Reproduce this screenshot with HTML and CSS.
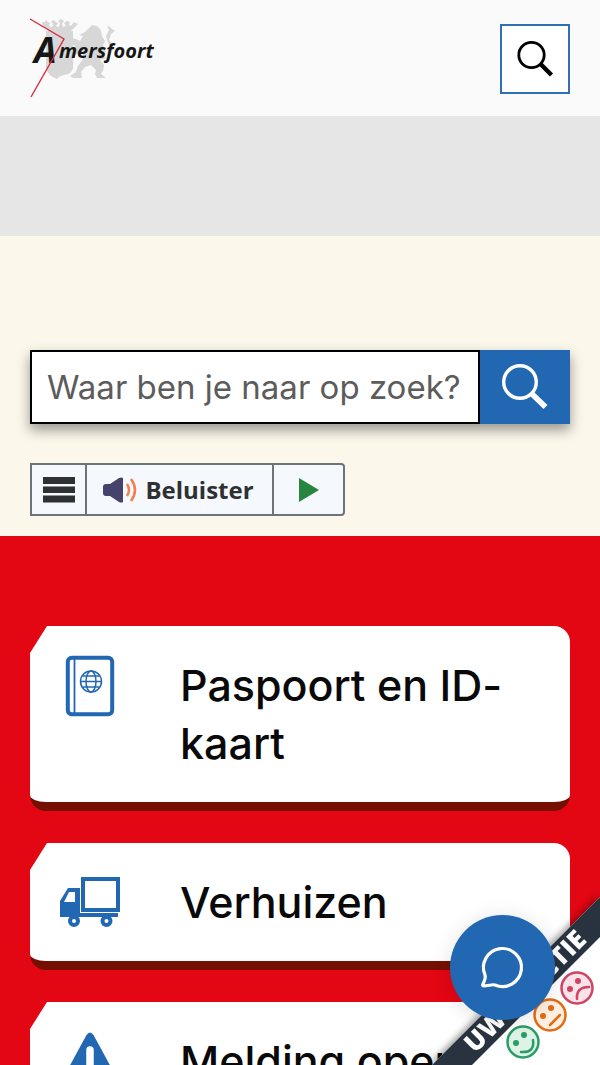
FILE: index.html
```html
<!DOCTYPE html>
<html lang="nl">
<head>
<meta charset="utf-8">
<meta name="viewport" content="width=device-width, initial-scale=1">
<title>Gemeente Amersfoort</title>
<link rel="stylesheet" href="styles.css">
</head>
<body>
<header class="header">
  <a class="logo" href="#" aria-label="Amersfoort">
    <svg width="128" height="80" viewBox="0 0 128 80">
      <g fill="#d7d7d7">
        <path d="M16 12q7 1 13-2 7 3 14 2v37q-1 6-9 7-5 1-7 4-9-3-11-11z"/>
        <path d="M12 3h3l1-2 2 2 2 1-1 3 3 1 1-3-2-2 2-2 3 2 2 1-2 3 3 1 1-4-2-2 3-2 3 2-2 3 1 3 3-1-2-3 3-2 3 1-1 3 2 1 3-4 4 2-5 5-3 3q-12-3-20 0L13 7z"/>
        <path d="M55 13l4-4 3-3 5 1 4 4 1 6 3 5-2 4 3 6-3 6 4 1 4-5 1-5-4-5-2-7 3-6-2-5 5 4 3 2-4 3-2 6 4 5-1 6-4 7-8 2 4 5-1 6-2 3 5 4h-9l-2-4 1-4-5-5-6 2-4 5 1 6h-9l-3-2 6-4 2-6 5-7v-7l-6 2-6 2-6-1 2-3-4-2 4-3 6 3 2-4-5-3-5-1-5-3-1-4 4 1 2-4 3 5 8 2 4 2 3-5-4-1z"/>
      </g>
      <text class="logo-text"><tspan class="logo-initial" x="4" y="44">A</tspan><tspan x="29" y="39">mersfoort</tspan></text>
      <path d="M0 0L34 20L1 78" fill="none" stroke="#dc2c3c" stroke-width="1.4"/>
    </svg>
  </a>
  <button class="search-toggle" type="button" aria-label="Zoeken">
    <svg width="40" height="40" viewBox="0 0 40 40" fill="none" stroke="#000"><circle cx="16.500" cy="16" r="12.7" stroke-width="2.8"/><path d="M25.500 25L36.500 36" stroke-width="4.4"/></svg>
  </button>
</header>
<div class="banner"></div>
<main>
  <section class="intro">
    <form class="search" role="search">
      <input class="search-input" type="text" aria-label="Zoeken" placeholder="Waar ben je naar op zoek?">
      <button class="search-button" type="button" aria-label="Zoek">
        <svg width="48" height="48" viewBox="0 0 48 48" fill="none" stroke="#fff"><circle cx="19" cy="19" r="16.3" stroke-width="3.4"/><path d="M30 30L44.500 44" stroke-width="5.6"/></svg>
      </button>
    </form>
    <div class="reader">
      <button class="reader-menu" type="button" aria-label="Menu">
        <svg width="32" height="26" viewBox="0 0 32 26" fill="#2f3031"><path d="M0 0h32v7H0zM0 9.5h32v6.5H0zM0 18.5h32v7H0z"/></svg>
      </button>
      <button class="reader-listen" type="button">
        <svg width="34" height="26" viewBox="0 0 34 26"><path d="M0 10q0-3 3-3h4l9-6q3-1 4 0v24q-2 1-4 0l-9-6H3q-3 0-3-3z" fill="#45426b"/><path d="M24 7q4 6 0 12M28 2q8 11 0 22" fill="none" stroke="#f47d50" stroke-width="2.5"/></svg>
        <span>Beluister</span>
      </button>
      <button class="reader-play" type="button" aria-label="Afspelen">
        <svg width="20" height="24" viewBox="0 0 20 24"><path d="M0 0L20 12L0 24z" fill="#27853f"/></svg>
      </button>
    </div>
  </section>
  <nav class="tasks" aria-label="Direct regelen">
    <a class="card" href="#">
      <svg class="card-icon" viewBox="0 0 60 60" fill="none" stroke="#2267b2"><rect x="7.800" y="1.800" width="44.400" height="56.400" rx="4" stroke-width="4"/><path d="M14.500 3v54" stroke-width="1.800"/><g stroke-width="1.500"><circle cx="31" cy="25.500" r="10.500"/><ellipse cx="31" cy="25.500" rx="5" ry="10.500"/><path d="M21 25.500h20M23 20h16M23 31h16"/></g></svg>
      <span class="card-title">Paspoort en ID-kaart</span>
    </a>
    <a class="card" href="#">
      <svg class="card-icon" viewBox="0 0 60 60"><path d="M21 4h39v35H21zM25 8v27h31V8z" fill="#2267b2" fill-rule="evenodd"/><path d="M8 15h12v25h38v4H0V28zM9 19L4 29h11V19z" fill="#2267b2" fill-rule="evenodd"/><g fill="#fff" stroke="#2267b2" stroke-width="4"><circle cx="14" cy="48" r="4"/><circle cx="46.500" cy="48" r="4"/></g></svg>
      <span class="card-title">Verhuizen</span>
    </a>
    <a class="card" href="#">
      <svg class="card-icon" viewBox="0 0 60 60"><path d="M26.500 3q3.500-5 7 0L58 48q2 5-4 6H6q-6-1-4-6z" fill="#2267b2"/><path d="M30 18v17M30 44v1" stroke="#fff" stroke-width="7.500" stroke-linecap="round"/></svg>
      <span class="card-title">Melding openbare ruimte</span>
    </a>
  </nav>
</main>
<a class="feedback" href="#" aria-label="Uw reactie">
  <svg width="168" height="168" viewBox="0 0 168 168">
    <path class="corner" d="M168 0V168H0z" fill="#fff"/>
    <path d="M168 0V40L40 168H0z" fill="#28333f"/>
    <text class="feedback-text" transform="translate(43 157) rotate(-45)">UW REACTIE</text>
    <g class="face" fill="#fbe3e9" stroke="#cf4465" transform="translate(145 91)"><circle r="15.500"/><path d="M0 11Q-1-1 12-1" fill="none"/><g fill="#cf4465" stroke="none"><circle cx="-7" cy="1" r="3"/><circle cx="1" cy="-7" r="3"/></g></g>
    <g class="face" fill="#fff0e2" stroke="#e56a12" transform="translate(118 118)"><circle r="15.500"/><path d="M0 10L10 0" fill="none"/><g fill="#e56a12" stroke="none"><circle cx="-7" cy="1" r="3"/><circle cx="1" cy="-7" r="3"/></g></g>
    <g class="face" fill="#ddf3e6" stroke="#2b9b67" transform="translate(91 145)"><circle r="15.500"/><path d="M-2 10Q12 11 10-2" fill="none"/><g fill="#2b9b67" stroke="none"><circle cx="-7" cy="1" r="3"/><circle cx="1" cy="-7" r="3"/></g></g>
  </svg>
</a>
<button class="chat" type="button" aria-label="Chat openen">
  <svg width="44" height="44" viewBox="0 0 44 44" fill="none" stroke="#fff" stroke-width="3.200" stroke-linejoin="round"><path d="M4 29A19 19 0 1 1 14 39Q12 38.500 10 39L3 40Q1 40 2 38Q5 32 4 29z"/></svg>
</button>
</body>
</html>
```

FILE: styles.css
```css
* { box-sizing: border-box; }
body {
  margin: 0;
  background: #e30613;
  color: #090909;
  font-family: Inter, "Liberation Sans", sans-serif;
}
button { padding: 0; cursor: pointer; font: inherit; color: inherit; }
svg { display: block; flex: none; overflow: visible; }

.header {
  display: flex;
  align-items: center;
  justify-content: space-between;
  height: 116px;
  padding: 2px 30px 0;
  background: #fafafa;
}
.logo-text {
  fill: #161616;
  font-family: "Open Sans", sans-serif;
  font-size: 20px;
  font-style: italic;
  font-weight: 700;
}
.logo-initial { font-size: 36px; }
.search-toggle {
  display: grid;
  place-items: center;
  width: 70px;
  height: 70px;
  border: 2px solid #2f6fb4;
  background: #fff;
}
.banner { height: 120px; background: #e6e6e6; }

.intro { padding: 114px 30px 20px; background: #fcf7eb; }
.search {
  display: flex;
  height: 74px;
  box-shadow: 0 6px 12px rgba(0, 0, 0, 0.4);
}
.search-input {
  flex: 1;
  min-width: 0;
  padding: 0 15px;
  border: 2px solid #000;
  border-radius: 0;
  background: #fff;
  font: 400 33px/40px Inter, "Liberation Sans", sans-serif;
}
.search-input::placeholder { color: #5c5c5c; opacity: 1; }
.search-button {
  display: grid;
  place-items: center;
  width: 90px;
  border: 0;
  background: #2267b2;
}
.reader {
  display: inline-flex;
  height: 53px;
  margin-top: 39px;
  border: 2px solid #6c737b;
  border-radius: 0 4px 4px 0;
  background: #f5f9fe;
  vertical-align: top;
}
.reader button {
  display: flex;
  align-items: center;
  justify-content: center;
  border: 0;
  background: none;
}
.reader .reader-menu { width: 53px; }
.reader .reader-listen {
  gap: 8px;
  width: 189px;
  padding-right: 2px;
  border: solid #6c737b;
  border-width: 0 2px;
  color: #2f3031;
  font: 700 24px/32px "Open Sans", sans-serif;
}
.reader .reader-play { width: 69px; }

.tasks {
  display: flex;
  flex-direction: column;
  gap: 32px;
  padding: 90px 30px;
  background: #e30613;
}
.card {
  display: flex;
  gap: 60px;
  padding: 30px 0 30px 30px;
  border-bottom: 9px solid #751000;
  border-radius: 16px;
  background: #fff;
  color: inherit;
  text-decoration: none;
  clip-path: polygon(17px 0, 100% 0, 100% 100%, 0 100%, 0 27px);
}
.card-icon { width: 60px; height: 60px; margin-bottom: -2px; }
.card-title { font-size: 43px; font-weight: 500; line-height: 58px; }

.feedback { position: fixed; right: 0; bottom: 0; }
.corner { filter: drop-shadow(-2px -2px 3px rgba(0, 0, 0, 0.35)); }
.feedback-text {
  fill: #fff;
  font-family: "Open Sans", sans-serif;
  font-size: 26px;
  font-weight: 800;
}
.face { stroke-width: 2.5px; stroke-linecap: round; }
.chat {
  position: fixed;
  right: 45px;
  bottom: 45px;
  display: grid;
  place-items: center;
  width: 105px;
  height: 105px;
  border: 0;
  border-radius: 50%;
  background: #2267b2;
  box-shadow: 0 2px 20px rgba(0, 0, 0, 0.12);
}
```
